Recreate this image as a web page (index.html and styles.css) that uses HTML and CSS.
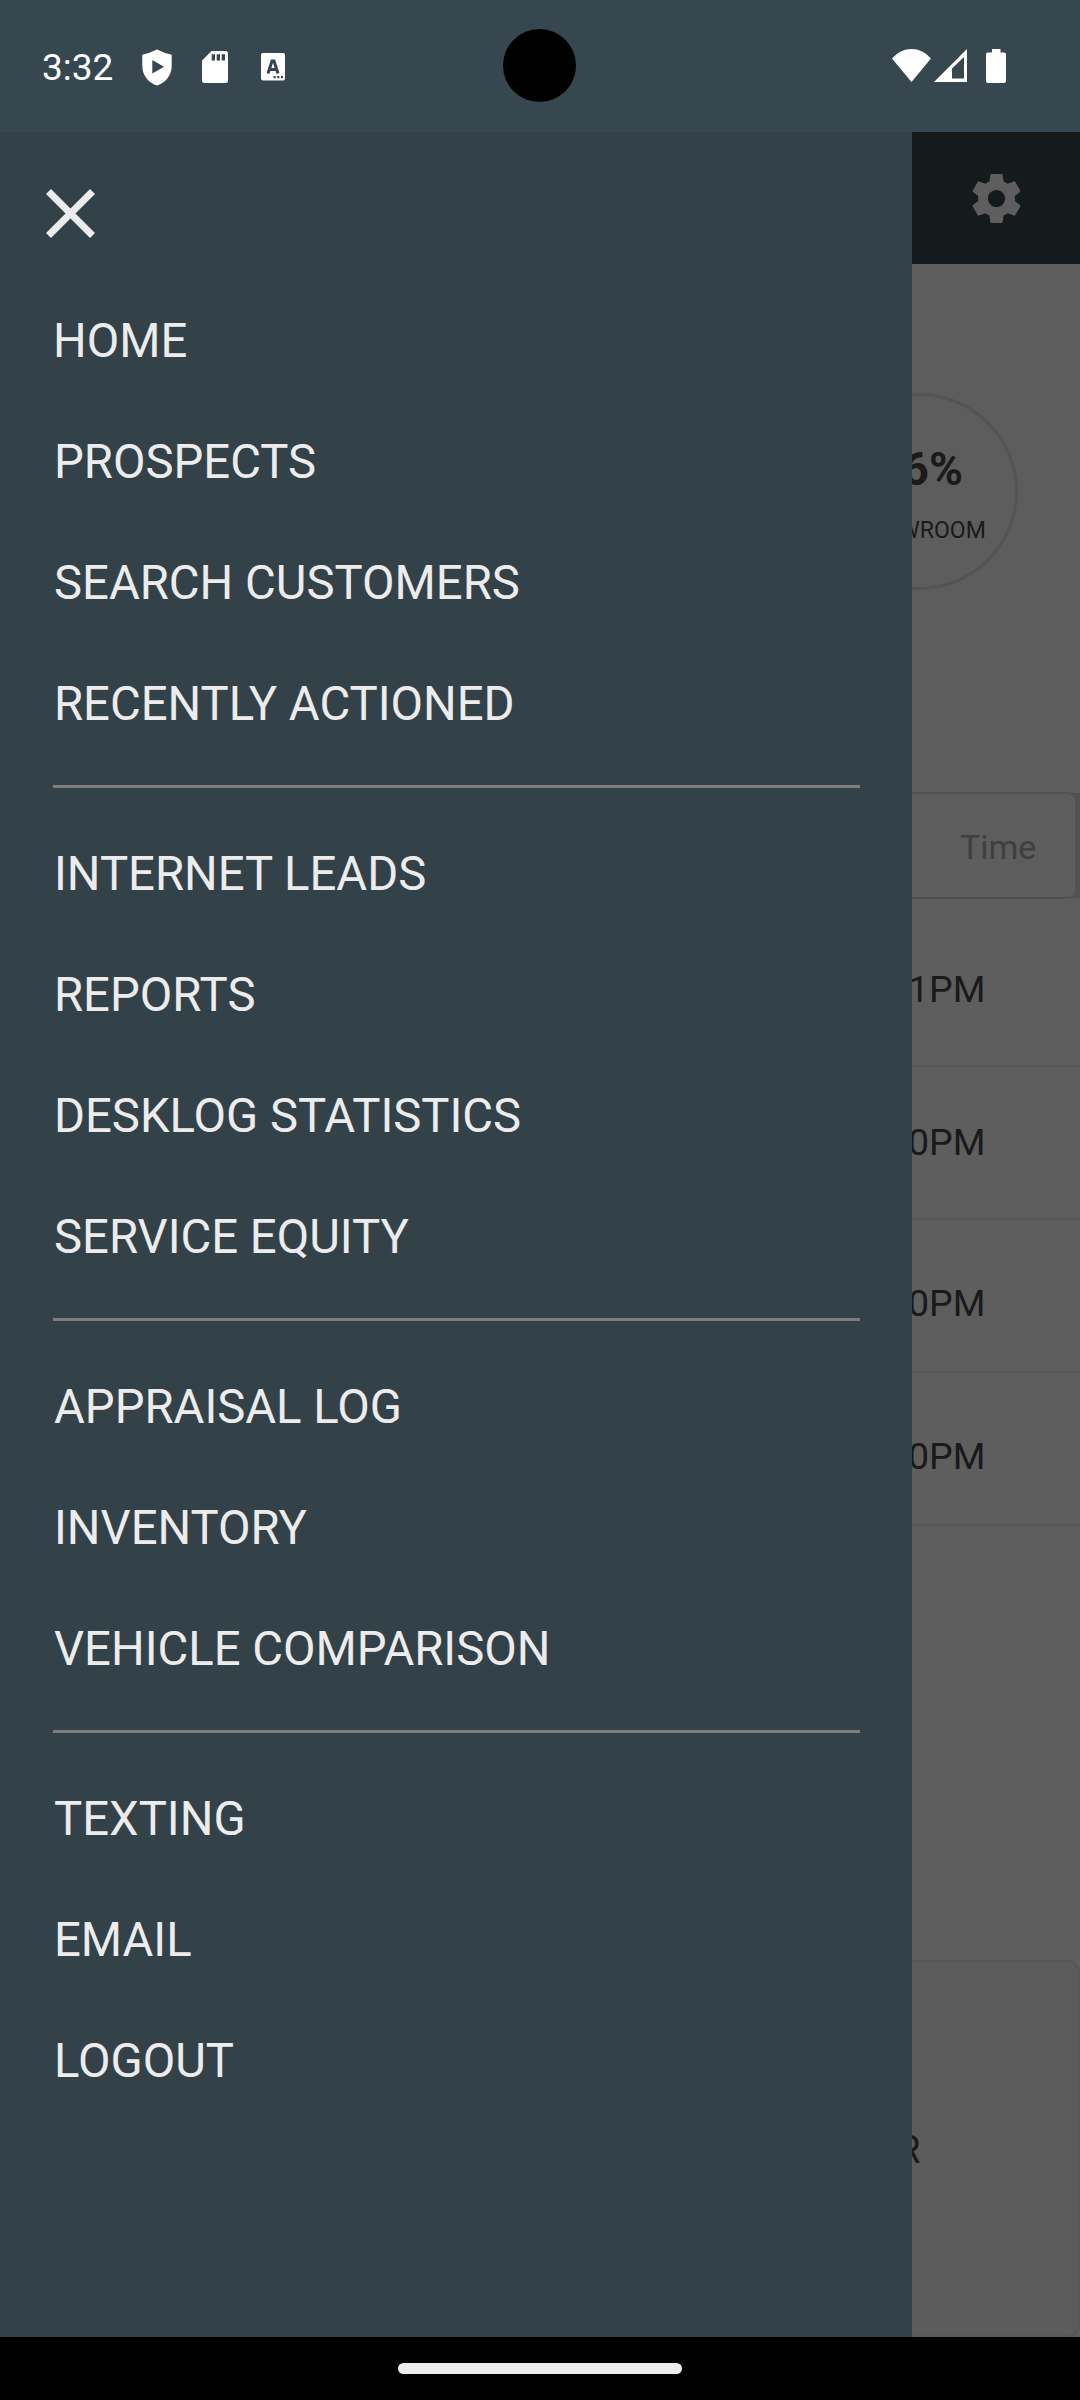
FILE: index.html
```html
<!DOCTYPE html>
<html lang="en">
<head>
<meta charset="utf-8">
<title>Menu</title>
<link rel="stylesheet" href="styles.css">
</head>
<body>
<div class="phone">
  <header class="status">
    <span class="clock">3:32</span>
    <svg class="shield" width="30" height="37" viewBox="0 0 30 37"><path fill="#fff" fill-rule="evenodd" d="M15 0.5Q22 4 29.7 5.8V17C29.7 26 24 33.5 15 36.5 6 33.5 .3 26 .3 17V5.8Q8 4 15 .5ZM10.3 11V24.5L22 17.7Z"/></svg>
    <svg class="sd" width="26" height="32" viewBox="0 0 26 32"><path fill="#fff" fill-rule="evenodd" d="M9.5 0H23.5Q26 0 26 2.500V29.500Q26 32 23.500 32H2.500Q0 32 0 29.500V9.500ZM9.700 3.200V9.500H13V3.200ZM14.700 3.200V9.500H18V3.200ZM19.700 3.200V9.500H23V3.200Z"/></svg>
    <svg class="akey" width="24" height="28" viewBox="0 0 24 28"><rect width="24" height="27.500" rx="2" fill="#fff"/><path fill="none" stroke="#37474f" stroke-width="3" d="M7 20.500 11 8H13L17 20.500M8.500 16.500H15.500"/><path fill="#37474f" d="M12.500 23h2.200v2.200h-2.200zM16.200 23h2.200v2.200h-2.200zM19.900 23h2.200v2.200h-2.200z"/></svg>
    <svg class="wifi" width="39" height="33" viewBox="0 0 39 33"><path fill="#fff" d="M0 9.500Q8 0 19.500 0T39 9.500L19.500 33Z"/></svg>
    <svg class="signal" width="33" height="33" viewBox="0 0 33 33"><path fill="#fff" fill-rule="evenodd" d="M33 0V33H0ZM30 8 18 19.500V29.500H30Z"/></svg>
    <svg class="battery" width="20" height="34" viewBox="0 0 20 34"><path fill="#fff" d="M6 0H14.500V3.500H18Q20 3.500 20 5.500V32Q20 34 18 34H2Q0 34 0 32V5.500Q0 3.500 2 3.500H6Z"/></svg>
    <i class="camera"></i>
  </header>
  <main class="screen">
    <section class="page">
      <div class="appbar"><svg width="59" height="59" viewBox="0 0 24 24"><path fill="#5e5e5e" d="M19.430 12.980c.04-.32.07-.64.07-.98s-.03-.66-.07-.98l2.110-1.650c.19-.15.24-.42.12-.64l-2-3.460c-.12-.22-.39-.3-.61-.22l-2.490 1c-.52-.4-1.080-.73-1.690-.98l-.38-2.650C14.460 2.180 14.250 2 14 2h-4c-.25 0-.46.18-.49.42l-.38 2.650c-.61.25-1.170.59-1.690.98l-2.490-1c-.23-.09-.49 0-.61.22l-2 3.460c-.13.22-.07.49.12.64l2.110 1.650c-.04.32-.07.65-.07.98s.03.66.07.98l-2.110 1.650c-.19.15-.24.42-.12.64l2 3.460c.12.22.39.3.61.22l2.490-1c.52.4 1.080.73 1.690.98l.38 2.650c.03.24.24.42.49.42h4c.25 0 .46-.18.49-.42l.38-2.650c.61-.25 1.170-.59 1.690-.98l2.490 1c.23.09.49 0 .61-.22l2-3.460c.12-.22.07-.49-.12-.64l-2.110-1.650zM12 15.500c-1.930 0-3.500-1.570-3.500-3.500s1.570-3.500 3.500-3.500 3.500 1.570 3.500 3.500-1.570 3.500-3.500 3.500z"/></svg></div>
      <div class="summary">
        <div class="ring"><b class="percent">56%</b><span class="label">SHOWROOM</span></div>
      </div>
      <div class="thead"><div class="cell">Time</div></div>
      <div class="row r1">1PM</div>
      <div class="row r2">0PM</div>
      <div class="row r3">0PM</div>
      <div class="row r4">0PM</div>
      <div class="card">R</div>
    </section>
    <nav class="drawer">
      <svg class="close" width="49" height="49" viewBox="0 0 49 49"><path fill="none" stroke="#ececec" stroke-width="7" d="M2.500 2.500 46.500 46.500M46.500 2.500 2.500 46.500"/></svg>
      <ul class="group"><li class="home">HOME</li><li>PROSPECTS</li><li>SEARCH CUSTOMERS</li><li>RECENTLY ACTIONED</li></ul>
      <ul class="group"><li>INTERNET LEADS</li><li>REPORTS</li><li>DESKLOG STATISTICS</li><li>SERVICE EQUITY</li></ul>
      <ul class="group"><li>APPRAISAL LOG</li><li>INVENTORY</li><li>VEHICLE COMPARISON</li></ul>
      <ul class="group"><li>TEXTING</li><li>EMAIL</li><li>LOGOUT</li></ul>
    </nav>
  </main>
  <footer class="navbar"><i class="pill"></i></footer>
</div>
</body>
</html>
```
FILE: styles.css
```css
* { box-sizing: border-box; margin: 0; padding: 0; }
body { background: #000; font-family: Roboto, sans-serif; }
.phone { width: 1080px; height: 2400px; display: flex; flex-direction: column; overflow: hidden; }

.status { position: relative; height: 132px; background: #37474f; display: flex; align-items: flex-start; padding-left: 42px; }
.clock { font-size: 37px; line-height: 44px; color: #fff; width: 100px; margin-top: 46px; }
.shield { margin-top: 49px; }
.sd { margin: 51px 0 0 30px; }
.akey { margin: 53px 0 0 33px; }
.wifi { margin: 49px 0 0 607px; }
.signal { margin: 49px 0 0 3px; }
.battery { margin: 49px 0 0 19px; }
.camera { position: absolute; left: 503px; top: 29px; width: 73px; height: 73px; border-radius: 50%; background: #000; }

.screen { position: relative; height: 2205px; }
.page { height: 2205px; background: #5e5e5e; color: #1a1a1a; overflow: hidden; display: flex; flex-direction: column; }
.appbar { height: 132px; flex: none; background: #151a1d; display: flex; justify-content: flex-end; align-items: center; padding: 1px 54.500px 0 0; }
.summary { height: 433px; flex: none; margin-bottom: 95px; background: #5d5d5d; padding: 129px 0 0 821px; }
.ring { width: 197px; height: 197px; border: 3px solid #545454; border-radius: 50%; display: flex; flex-direction: column; align-items: center; padding-top: 46px; }
.percent { font-size: 46px; line-height: 54px; }
.label { font-size: 23.1px; line-height: 28px; margin-top: 21px; white-space: nowrap; }

.thead { height: 107px; flex: none; background: linear-gradient(#525251, #525251) right 1px / 12px 105px no-repeat; padding-right: 4px; }
.cell { height: 107px; border: 2px solid #535353; border-right-width: 1px; border-radius: 8px; background: #5d5d5d; color: #3f3f3f; font-size: 34px; line-height: 106px; padding-left: 958px; }
.row { flex: none; font-size: 37.5px; line-height: 44px; padding-left: 908px; border-bottom: 2px solid #585858; }
.r1 { height: 168px; padding-top: 68px; }
.r2 { height: 153px; padding-top: 53px; }
.r3 { height: 153px; padding-top: 61px; }
.r4 { height: 153px; padding-top: 61px; }
.card { flex: none; height: 377px; margin-top: 434px; border: 2px solid #585858; border-radius: 12px; background: #5c5c5c; font-size: 38px; line-height: 44px; padding: 166px 0 0 895px; }

.drawer { position: absolute; left: 0; top: 0; width: 912px; height: 2205px; background: #334148; padding: 57px 52px 0 53px; }
.close { display: block; margin: 0 0 43px -7.500px; }
.group { list-style: none; border-bottom: 3px solid #7d7d7d; padding-bottom: 20px; margin-bottom: 26px; }
.group:last-child { border: 0; }
.group li { height: 121px; line-height: 121px; padding-left: 1px; font-size: 47.25px; color: #ececec; white-space: nowrap; }
.group .home { padding-left: 0; }

.navbar { height: 63px; display: flex; justify-content: center; padding-top: 26px; }
.pill { width: 284px; height: 11px; border-radius: 6px; background: #ececec; }
```
